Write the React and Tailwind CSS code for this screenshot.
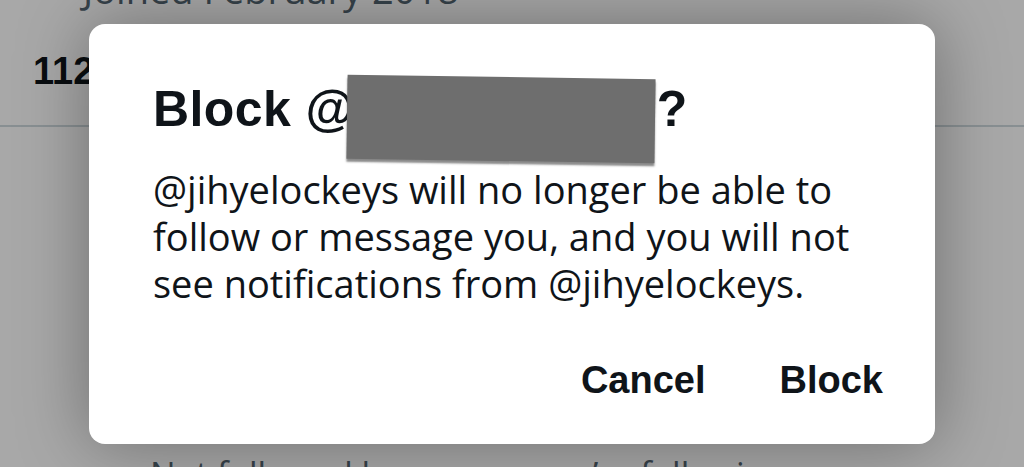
import { useState } from 'react';

const handle = 'jihyelockeys';

function CalendarGlyph() {
    return (
        <svg viewBox="0 0 28 28" className="w-[28px] h-[28px] shrink-0" fill="currentColor">
            <path d="M4 4h20a3 3 0 0 1 3 3v14a3 3 0 0 1-3 3H4a3 3 0 0 1-3-3V7a3 3 0 0 1 3-3zm0 6v11h20V10z" />
        </svg>
    );
}

function ProfileBehind() {
    return (
        <div className="flex flex-col" style={{ fontFamily: '"Open Sans", "Liberation Sans", sans-serif' }}>
            <div className="flex items-end gap-[20px] pl-[35px] -mt-[34px] h-[46px] text-[#536471] text-[38px] leading-[46px]">
                <div className="mb-[12px]">
                    <CalendarGlyph />
                </div>
                <span>Joined February 2018</span>
            </div>
            <div className="flex items-center gap-[12px] pl-[33px] mt-[34px] h-[50px] text-[38px]" style={{ fontFamily: '"Liberation Sans", Arial, sans-serif' }}>
                <span className="font-bold text-[#0f1419]">112</span>
                <span className="text-[#536471]">Following</span>
            </div>
            <div className="mt-[29px] border-b-2 border-[#cfd9de]" />
            <div className="h-[325px]" />
            <div className="pl-[150px] text-[34px] leading-[44px] text-[#536471]">Not followed by anyone you’re following</div>
        </div>
    );
}

function BlockDialog({ onClose }) {
    return (
        <div className="w-[846px] bg-white rounded-[16px] shadow-[0_0_70px_rgba(0,0,0,0.35)] pt-[55px] pb-[41px] pl-[64px] pr-[52px]">
            <div className="relative">
                <h2 className="text-[50px] leading-[60px] font-bold tracking-[0.4px] text-[#0f1419]" style={{ fontFamily: '"Liberation Sans", Arial, sans-serif' }}>
                    Block @{handle}?
                </h2>
                {/* redaction strip over the handle */}
                <div className="absolute left-[194px] top-[-2px] w-[308px] h-[84px] bg-[#6e6e6e] rotate-[0.8deg] shadow-[0_3px_2px_rgba(60,60,60,0.6)]" />
            </div>
            <p className="mt-[27px] text-[38px] leading-[47px] text-[#0f1419]" style={{ fontFamily: '"Open Sans", "Noto Sans", sans-serif' }}>
                @{handle} will no longer be able to
                <br />
                follow or message you, and you will not
                <br />
                see notifications from @{handle}.
            </p>
            <div className="mt-[50px] flex justify-end gap-[74px] text-[38px] leading-[46px] font-bold text-[#0f1419]" style={{ fontFamily: '"Liberation Sans", Arial, sans-serif' }}>
                <button onClick={onClose}>Cancel</button>
                <button onClick={onClose}>Block</button>
            </div>
        </div>
    );
}

export default function App() {
    const [open, setOpen] = useState(true);

    return (
        <div className="relative w-[1024px] h-[467px] overflow-hidden bg-white">
            <ProfileBehind />
            {open && (
                <div className="absolute inset-0 bg-black/[0.34]">
                    <div className="pt-[24px] pl-[89px]">
                        <BlockDialog onClose={() => setOpen(false)} />
                    </div>
                </div>
            )}
        </div>
    );
}
